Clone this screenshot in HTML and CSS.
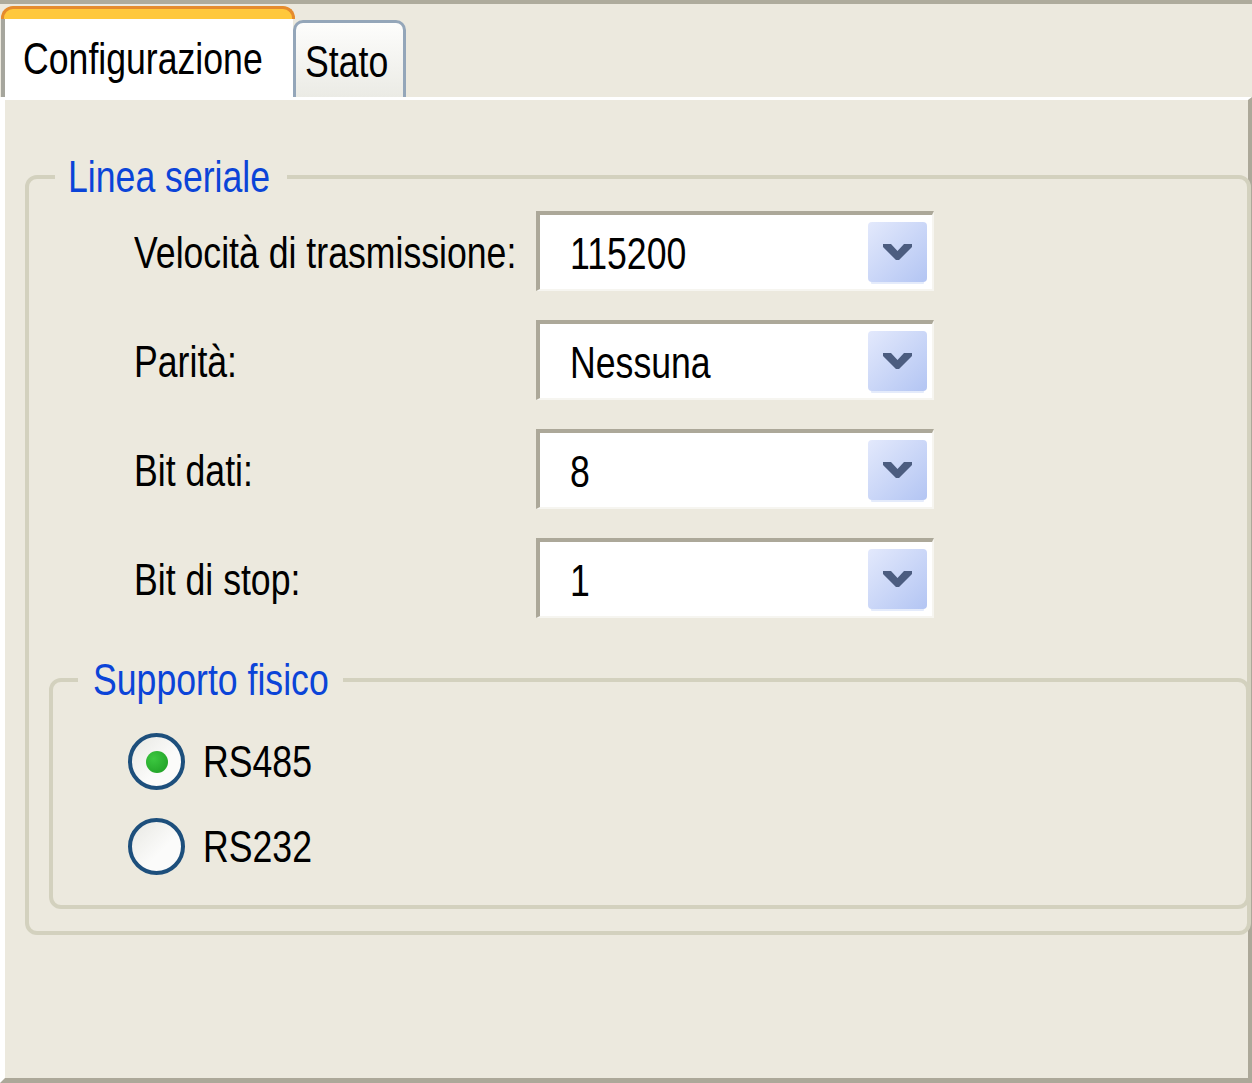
FILE: index.html
```html
<!DOCTYPE html>
<html lang="it">
<head>
  <meta charset="UTF-8" />
  <title>Linea seriale</title>
  <link rel="stylesheet" href="styles.css">
</head>
<body>

<div class="window">
  <div class="tabs">
    <div class="tab tab-active">
      <div class="tab-cap"></div>
      <div class="tab-label"><span class="txt">Configurazione</span></div>
    </div>
    <div class="tab tab-idle">
      <div class="tab-label"><span class="txt">Stato</span></div>
    </div>
  </div>

  <div class="panel">
    <fieldset class="group">
      <legend><span class="txt legend-serial">Linea seriale</span></legend>

      <div class="rows">
        <div class="row">
          <span class="row-label"><span class="txt">Velocità di trasmissione:</span></span>
          <div class="combo">
            <span class="combo-value"><span class="txt">115200</span></span>
            <span class="combo-btn">
              <svg width="29" height="16" viewBox="0 0 29 16"><polygon points="0,0 8,0 14.5,7 21,0 29,0 29,3 16,16 13,16 0,3" fill="#4c5d80"/></svg>
            </span>
          </div>
        </div>
        <div class="row">
          <span class="row-label"><span class="txt">Parità:</span></span>
          <div class="combo">
            <span class="combo-value"><span class="txt">Nessuna</span></span>
            <span class="combo-btn">
              <svg width="29" height="16" viewBox="0 0 29 16"><polygon points="0,0 8,0 14.5,7 21,0 29,0 29,3 16,16 13,16 0,3" fill="#4c5d80"/></svg>
            </span>
          </div>
        </div>
        <div class="row">
          <span class="row-label"><span class="txt">Bit dati:</span></span>
          <div class="combo">
            <span class="combo-value"><span class="txt">8</span></span>
            <span class="combo-btn">
              <svg width="29" height="16" viewBox="0 0 29 16"><polygon points="0,0 8,0 14.5,7 21,0 29,0 29,3 16,16 13,16 0,3" fill="#4c5d80"/></svg>
            </span>
          </div>
        </div>
        <div class="row">
          <span class="row-label"><span class="txt">Bit di stop:</span></span>
          <div class="combo">
            <span class="combo-value"><span class="txt">1</span></span>
            <span class="combo-btn">
              <svg width="29" height="16" viewBox="0 0 29 16"><polygon points="0,0 8,0 14.5,7 21,0 29,0 29,3 16,16 13,16 0,3" fill="#4c5d80"/></svg>
            </span>
          </div>
        </div>
      </div>

      <fieldset class="group group-inner">
        <legend><span class="txt legend-media">Supporto fisico</span></legend>
        <div class="radios">
          <div class="radio">
            <span class="radio-circle"><span class="radio-dot"></span></span>
            <span class="radio-label"><span class="txt">RS485</span></span>
          </div>
          <div class="radio">
            <span class="radio-circle"></span>
            <span class="radio-label"><span class="txt">RS232</span></span>
          </div>
        </div>
      </fieldset>
    </fieldset>
  </div>
</div>

</body>
</html>
```

FILE: styles.css
```css
* {
  margin: 0;
  padding: 0;
  box-sizing: border-box;
}
body {
  font-family: "Liberation Sans", Arial, sans-serif;
  font-size: 44px;
  line-height: 50px;
  color: #000;
  background: #ece9de;
}
/* the UI font is a narrow grotesque: squeeze Liberation Sans to match */
.txt {
  display: inline-block;
  white-space: nowrap;
  transform: scaleX(0.81);
  transform-origin: left center;
}
.window {
  height: 1083px;
  display: flex;
  flex-direction: column;
  border-top: 4px solid #aeab9c;
}

/* tabs */
.tabs {
  height: 93px;
  display: flex;
  align-items: flex-end;
  padding-left: 1px;
}
.tab-active {
  width: 292px;
  display: flex;
  flex-direction: column;
}
.tab-cap {
  height: 13px;
  margin-right: -2px;
  background: #ffc83c;
  border: 3px solid #e58b2d;
  border-bottom: none;
  border-radius: 12px 12px 0 0;
}
.tab-active .tab-label {
  height: 78px;
  background: #fff;
  border-left: 4px solid #a6a69d;
  padding: 15px 0 0 18px;
  overflow: hidden;
}
.tab-idle {
  width: 113px;
  height: 77px;
  border: 3px solid #94a6b9;
  border-bottom: none;
  border-radius: 10px 10px 0 0;
  background: linear-gradient(#fdfdfc, #ebebe5);
  padding: 14px 0 0 9px;
  overflow: hidden;
}

/* panel */
.panel {
  flex: 1;
  border-top: 3px solid #fff;
  border-left: 5px solid #fff;
  border-right: 4px solid #aca899;
  border-bottom: 5px solid #aca899;
}
.group {
  border: 4px solid #d3d1be;
  border-radius: 12px;
  margin: 52px -3px 0 20px;
  padding: 9px 0 22px 20px;
  min-width: 0;
}
.group legend {
  color: #0b44d8;
  margin-left: 6px;
  padding: 0 16px 0 13px;
}
.legend-serial {
  margin-right: -47px;
}
.legend-media {
  margin-right: -55px;
}
.group-inner {
  margin: 37px -3px 0 0;
  padding: 28px 0 30px 20px;
}
.group-inner legend {
  margin-left: 5px;
  padding: 0 14px 0 15px;
}

/* combo rows */
.rows {
  display: flex;
  flex-direction: column;
  gap: 29px;
  margin-left: 85px;
}
.row {
  display: flex;
  align-items: center;
  height: 80px;
}
.row-label {
  width: 402px;
  padding-top: 4px;
}
.combo {
  width: 398px;
  height: 80px;
  display: flex;
  align-items: center;
  background: #fff;
  border-top: 4px solid #aca899;
  border-left: 4px solid #aca899;
  border-right: 2px solid #f6f5f0;
  border-bottom: 2px solid #f6f5f0;
}
.combo-value {
  flex: 1;
  padding: 4px 0 0 30px;
}
.combo-btn {
  width: 59px;
  height: 60px;
  margin-right: 5px;
  display: flex;
  align-items: center;
  justify-content: center;
  border-radius: 4px;
  background: linear-gradient(135deg, #e3e9fc, #b3c5f3);
  box-shadow: 0 5px 0 -3px #e4ebfb;
}

/* radios */
.radios {
  display: flex;
  flex-direction: column;
  gap: 28px;
  margin-left: 55px;
}
.radio {
  display: flex;
  align-items: center;
  gap: 18px;
}
.radio-circle {
  width: 57px;
  height: 57px;
  border: 4px solid #1d4f7c;
  border-radius: 50%;
  background: linear-gradient(135deg, #e8e8e3, #fbfbfa 60%);
  display: flex;
  align-items: center;
  justify-content: center;
}
.radio-dot {
  width: 22px;
  height: 22px;
  border-radius: 50%;
  background: radial-gradient(circle at 35% 35%, #3cc840, #1c9a22);
}
```
